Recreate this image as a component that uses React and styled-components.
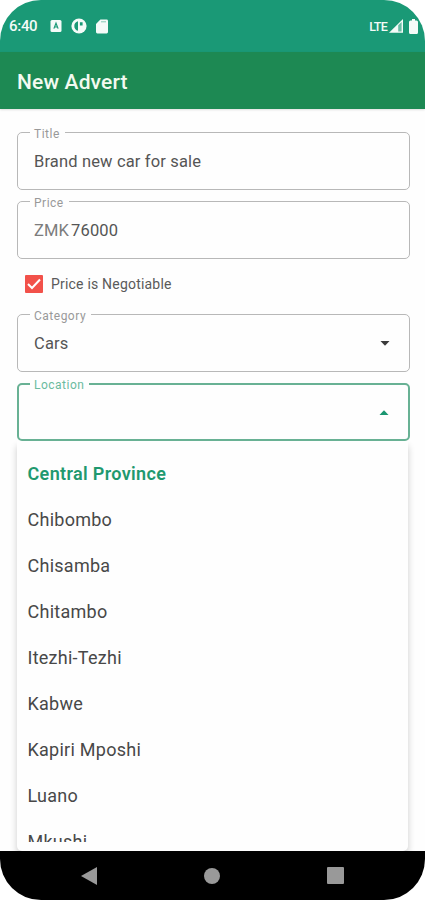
import React from 'react';
import styled, { createGlobalStyle } from 'styled-components';

const GlobalStyle = createGlobalStyle`
    * {
        box-sizing: border-box;
    }

    body {
        margin: 0;
        background: #fff;
        font-family: Roboto, "Liberation Sans", sans-serif;
    }
`;

const Screen = styled.div`
    width: 425px;
    height: 900px;
    display: flex;
    flex-direction: column;
    overflow: hidden;
    border-radius: 41px;
    background: #fefefe;
`;

const StatusBar = styled.header`
    flex: none;
    height: 52px;
    padding: 0 7px 0 9px;
    display: flex;
    align-items: center;
    justify-content: space-between;
    color: #f4fbf8;
    background: #1a9976;
`;

const StatusGroup = styled.div`
    display: flex;
    align-items: center;
    gap: ${(props) => props.$gap || 0}px;

    svg {
        display: block;
    }
`;

const Clock = styled.span`
    width: 41px;
    font-size: 15px;
    font-weight: 500;
    letter-spacing: -0.3px;
`;

const Network = styled.span`
    margin-right: -1px;
    font-size: 12.5px;
    font-weight: 500;
    letter-spacing: -0.7px;
`;

const AppBar = styled.div`
    flex: none;
    height: 57px;
    padding: 2px 17px 0;
    display: flex;
    align-items: center;
    background: #1d8953;
    box-shadow: 0 1px 2px rgba(0, 0, 0, 0.12);
`;

const AppTitle = styled.h1`
    margin: 0;
    font-size: 21px;
    font-weight: 500;
    letter-spacing: 0.15px;
    color: #f3faf0;
`;

const Form = styled.main`
    flex: 1;
    min-height: 0;
    padding: 23px 15px 0 17px;
    display: flex;
    flex-direction: column;
    overflow: hidden;
`;

const FieldBox = styled.div`
    position: relative;
    flex: none;
    height: 58px;
    margin-bottom: ${(props) => (props.$last ? 0 : 11)}px;
    padding: 0 19px 0 ${(props) => (props.$active ? 15 : 16)}px;
    display: flex;
    align-items: center;
    justify-content: space-between;
    border: ${(props) => (props.$active ? '2px solid #68b194' : '1px solid #b8b8b8')};
    border-radius: 5px;
    color: ${(props) => (props.$active ? '#1a9670' : '#3b3b3b')};
`;

const FieldLabel = styled.span`
    position: absolute;
    top: ${(props) => (props.$active ? -8 : -7)}px;
    left: ${(props) => (props.$active ? 11 : 12)}px;
    padding: 0 5px 0 4px;
    font-size: 12px;
    line-height: 16px;
    letter-spacing: 0.5px;
    color: ${(props) => (props.$active ? '#6bbb9e' : '#999')};
    background: #fefefe;
`;

const FieldValue = styled.span`
    font-size: 16.5px;
    letter-spacing: 0.15px;
    color: #555;
`;

const Prefix = styled.span`
    margin-right: 2px;
    color: #7c7c7c;
`;

const CheckRow = styled.label`
    flex: none;
    height: 34px;
    margin: -3px 0 13px;
    padding-left: 8px;
    display: flex;
    align-items: center;
    gap: 8px;
    font-size: 14px;
    letter-spacing: 0.2px;
    color: #5a5a5a;
`;

const CheckBox = styled.span`
    width: 18px;
    height: 18px;
    display: grid;
    place-items: center;
    border-radius: 1px;
    background: #f2514a;
`;

const Menu = styled.div`
    flex: 1;
    min-height: 0;
    margin-right: 2px;
    padding: 10px 0 9px;
    display: flex;
    border-radius: 0 0 5px 5px;
    background: #fefefe;
    box-shadow: 0 5px 7px rgba(0, 0, 0, 0.2);
`;

const MenuList = styled.ul`
    flex: 1;
    margin: 0;
    padding: 0;
    overflow: hidden;
    list-style: none;
`;

const MenuItem = styled.li`
    height: 46px;
    padding-left: 10.5px;
    font-size: 18px;
    line-height: 46px;
    font-weight: ${(props) => (props.$heading ? 600 : 400)};
    letter-spacing: ${(props) => (props.$heading ? 0.35 : 0.26)}px;
    color: ${(props) => (props.$heading ? '#1f996f' : '#484848')};
`;

const NavBar = styled.nav`
    flex: none;
    height: 49px;
    padding: 0 81px;
    display: flex;
    align-items: center;
    justify-content: space-between;
    background: #000;

    svg {
        display: block;
    }
`;

const KeyboardIcon = () => (
    <svg width="12" height="12" viewBox="0 0 12 12">
        <rect x="0.5" y="0" width="11" height="12" rx="1.5" fill="currentColor" />
        <path d="M3.9 8.6 6 3.2l2.1 5.4M4.6 7h2.8" fill="none" stroke="#1a9976" strokeWidth="1.2" />
    </svg>
);

const DialIcon = () => (
    <svg width="16" height="16" viewBox="0 0 16 16">
        <circle cx="8" cy="8" r="7.6" fill="currentColor" />
        <path d="M7 3.2A5 5 0 0 0 3.3 8 5 5 0 0 0 7 12.8ZM8.9 4.2h2.7v3.2H8.9Z" fill="#1a9976" />
    </svg>
);

const SdCardIcon = () => (
    <svg width="12" height="15" viewBox="0 0 12 15">
        <path d="M4.4.5h6.2A1.4 1.4 0 0 1 12 1.9v11.2a1.4 1.4 0 0 1-1.4 1.4H1.4A1.4 1.4 0 0 1 0 13.1V5Z" fill="currentColor" />
        <path d="M5 2.8h5" stroke="#1a9976" strokeWidth="1" strokeOpacity="0.5" />
    </svg>
);

const SignalIcon = () => (
    <svg width="14" height="14" viewBox="0 0 14 14">
        <path d="M0 13.8 14 0v13.8Z" fill="currentColor" />
        <path d="M9.2 6.2 12.6 3v9.4H9.2Z" fill="#1a9976" fillOpacity="0.65" />
    </svg>
);

const BatteryIcon = () => (
    <svg width="9" height="15" viewBox="0 0 9 15">
        <path d="M3 0h3v1.5h1.5A1.5 1.5 0 0 1 9 3v10.5A1.5 1.5 0 0 1 7.5 15h-6A1.5 1.5 0 0 1 0 13.5V3A1.5 1.5 0 0 1 1.5 1.5H3Z" fill="currentColor" />
    </svg>
);

const Caret = ({ up }) => (
    <svg width="10" height="5" viewBox="0 0 10 5">
        <path d={up ? 'M0.5 5 5 0.2 9.5 5Z' : 'M0.5 0 5 4.8 9.5 0Z'} fill="currentColor" />
    </svg>
);

const Field = ({ label, children, active, last, caret }) => (
    <FieldBox $active={active} $last={last}>
        <FieldLabel $active={active}>{label}</FieldLabel>
        <FieldValue>{children}</FieldValue>
        {caret && <Caret up={caret === 'up'} />}
    </FieldBox>
);

const towns = ['Chibombo', 'Chisamba', 'Chitambo', 'Itezhi-Tezhi', 'Kabwe', 'Kapiri Mposhi', 'Luano', 'Mkushi'];

const App = () => (
    <>
        <GlobalStyle />
        <Screen>
            <StatusBar>
                <StatusGroup>
                    <Clock>6:40</Clock>
                    <StatusGroup $gap={9}>
                        <KeyboardIcon />
                        <DialIcon />
                        <SdCardIcon />
                    </StatusGroup>
                </StatusGroup>
                <StatusGroup $gap={3}>
                    <Network>LTE</Network>
                    <SignalIcon />
                    <span />
                    <BatteryIcon />
                </StatusGroup>
            </StatusBar>
            <AppBar>
                <AppTitle>New Advert</AppTitle>
            </AppBar>
            <Form>
                <Field label="Title">Brand new car for sale</Field>
                <Field label="Price"><Prefix>ZMK</Prefix>76000</Field>
                <CheckRow>
                    <CheckBox>
                        <svg width="14" height="12" viewBox="0 0 14 12">
                            <path d="m1 6 4 4 8-8.5" fill="none" stroke="#fff" strokeWidth="2" />
                        </svg>
                    </CheckBox>
                    Price is Negotiable
                </CheckRow>
                <Field label="Category" caret="down">Cars</Field>
                <Field label="Location" caret="up" active last />
                <Menu>
                    <MenuList>
                        <MenuItem $heading>Central Province</MenuItem>
                        {towns.map((town) => <MenuItem key={town}>{town}</MenuItem>)}
                    </MenuList>
                </Menu>
            </Form>
            <NavBar>
                <svg width="16" height="18" viewBox="0 0 16 18"><path d="M0 9 16 0v18Z" fill="#999" /></svg>
                <svg width="16" height="16" viewBox="0 0 16 16"><circle cx="8" cy="8" r="8" fill="#999" /></svg>
                <svg width="17" height="17" viewBox="0 0 17 17"><rect width="17" height="17" rx="1" fill="#999" /></svg>
            </NavBar>
        </Screen>
    </>
);

export default App;
